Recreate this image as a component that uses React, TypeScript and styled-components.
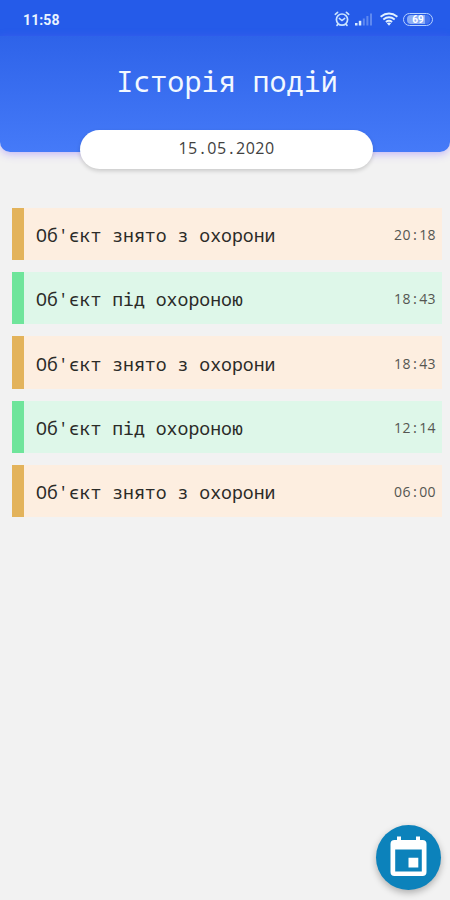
import React, { Fragment } from 'react';
import styled, { createGlobalStyle } from 'styled-components';

const GlobalStyle = createGlobalStyle`
  * { box-sizing: border-box; }
  body { margin: 0; background: #f2f2f2; }
`;

const Screen = styled.div`
  position: relative;
  display: flex;
  flex-direction: column;
  width: 450px;
  height: 900px;
  overflow: hidden;
  background: #f2f2f2;
  font-family: 'Noto Sans Mono', 'DejaVu Sans Mono', monospace;
`;

const StatusBar = styled.div`
  display: flex;
  align-items: center;
  height: 36px;
  padding: 2px 17px 0 23px;
  background: #255be9;
  color: #e9f3ff;
`;

const Clock = styled.span`
  flex: 1;
  padding-top: 1px;
  font: 700 14px/18px Roboto, sans-serif;
  letter-spacing: 0.1px;
`;

const StatusIcons = styled.div`
  display: flex;
  align-items: center;
  height: 18px;
  gap: 5px;
`;

const Header = styled.header`
  display: flex;
  flex-direction: column;
  align-items: center;
  height: 116px;
  padding-top: 24px;
  border-radius: 0 0 10px 10px;
  background: linear-gradient(#2e63e9, #457af8);
  box-shadow: 0 2px 8px rgba(125, 95, 255, 0.42);
`;

const Title = styled.h1`
  margin: 0 0 0 4px;
  height: 42px;
  color: #f2f8ff;
  font-size: 28.4px;
  font-weight: 400;
  line-height: 42px;
  white-space: nowrap;
`;

const DatePill = styled.div`
  flex-shrink: 0;
  width: 293px;
  height: 39px;
  margin: 28px 0 0 2px;
  padding-left: 1px;
  border-radius: 20px;
  background: #fff;
  box-shadow: 0 2px 4px rgba(0, 0, 0, 0.17);
  color: #414141;
  font-size: 16px;
  line-height: 37px;
  text-align: center;
`;

const Digits = styled.span`
  font-family: 'Open Sans', 'Noto Sans', sans-serif;
  letter-spacing: 0.028em;
`;

const EventList = styled.ul`
  display: flex;
  flex-direction: column;
  gap: 12px;
  margin: 56.3px 8px 0 12px;
  padding: 0;
  list-style: none;
`;

const EventRow = styled.li<{ $armed: boolean }>`
  display: flex;
  align-items: center;
  justify-content: space-between;
  height: 52.1px;
  padding: 2px 6px 0 12px;
  border-left: 12px solid ${(p) => (p.$armed ? '#6fe59b' : '#e3b35b')};
  background: ${(p) => (p.$armed ? '#def7e9' : '#fdeee0')};
`;

const EventName = styled.span`
  color: #2b2b28;
  font-size: 18.15px;
  line-height: 26px;
  white-space: nowrap;
`;

const EventTime = styled.time`
  color: #555651;
  font-size: 14px;
  line-height: 20px;
`;

const CalendarButton = styled.button`
  position: absolute;
  right: 9px;
  bottom: 10px;
  display: grid;
  place-items: center;
  width: 65px;
  height: 65px;
  padding: 0 0 2px;
  border: 0;
  border-radius: 50%;
  background: #0c82bb;
  box-shadow: 0 3px 7px rgba(0, 0, 0, 0.28);
`;

const WifiSvg = styled.svg`
  margin-left: 2px;
`;

const Battery = styled.span`
  display: flex;
  align-items: center;
  justify-content: center;
  width: 30px;
  height: 13px;
  padding: 1px;
  border: 1.5px solid #b5d0ff;
  border-radius: 7px;
`;

const BatteryLevel = styled.span`
  width: 23px;
  height: 9px;
  border-radius: 4px;
  background: linear-gradient(90deg, #8aadf6 80%, #4674ed 80%);
  color: #fff;
  font: 700 10px/9px Roboto, sans-serif;
  text-align: center;
`;

const events = [
  { armed: false, time: '20:18' },
  { armed: true, time: '18:43' },
  { armed: false, time: '18:43' },
  { armed: true, time: '12:14' },
  { armed: false, time: '06:00' },
];

/* Digits use plain zeros while separators keep the full monospace cell. */
const Numeric = ({ value, separator }: { value: string; separator: string }) => (
  <>
    {value.split(separator).map((part, index) => (
      <Fragment key={index}>
        {index > 0 && separator}
        <Digits>{part}</Digits>
      </Fragment>
    ))}
  </>
);

const AlarmIcon = () => (
  <svg width="16" height="18" viewBox="0 0 16 18" fill="none" stroke="#c9e3ff" strokeWidth="1.7" strokeLinecap="round">
    <circle cx="8" cy="9.6" r="5.6" />
    <path d="M1.3 4.3 3.6 2.3M14.7 4.3 12.4 2.3M3.9 14.4 3 15.4M12.1 14.4 13 15.4" />
    <path d="m5.3 8.4 2.7 2.1 2.7-2.1" strokeWidth="1.5" />
  </svg>
);

const SignalIcon = () => (
  <svg width="18" height="18" viewBox="0 0 18 18" fill="#d9ebff">
    <rect x="0" y="13" width="2.5" height="2.5" />
    <rect x="3.8" y="10.8" width="2.5" height="4.7" />
    <g opacity="0.32">
      <rect x="7.8" y="8.5" width="2" height="7" />
      <rect x="11.4" y="6" width="2" height="9.5" />
      <rect x="15" y="3.5" width="2" height="12" />
    </g>
  </svg>
);

const WifiIcon = () => (
  <WifiSvg width="18" height="18" viewBox="0 0 18 18" fill="none" stroke="#e0f0ff" strokeWidth="1.9">
    <path d="M.6 6.7Q9 .2 17.4 6.7M3.3 9.5Q9 5 14.7 9.5M5.9 12.1Q9 9.6 12.1 12.1" />
    <path d="m6.9 13.2 2.1 2.5 2.1-2.5Q9 11.7 6.9 13.2Z" fill="#e0f0ff" stroke="none" />
  </WifiSvg>
);

const CalendarIcon = () => (
  <svg width="37" height="41" viewBox="0 0 37 41">
    <path
      fill="#fff"
      fillRule="evenodd"
      d="M7 .5h4V4h15V.5h4V4h2.5a4 4 0 0 1 4 4v28a4 4 0 0 1-4 4h-28a4 4 0 0 1-4-4V8a4 4 0 0 1 4-4H7ZM5.2 13.5v22h26.6v-22ZM18.5 21.8h9.8v9.7h-9.8Z"
    />
  </svg>
);

export default function App() {
  return (
    <>
      <GlobalStyle />
      <Screen>
        <StatusBar>
          <Clock>11:58</Clock>
          <StatusIcons>
            <AlarmIcon />
            <SignalIcon />
            <WifiIcon />
            <Battery>
              <BatteryLevel>69</BatteryLevel>
            </Battery>
          </StatusIcons>
        </StatusBar>
        <Header>
          <Title>Історія подій</Title>
          <DatePill>
            <Numeric value="15.05.2020" separator="." />
          </DatePill>
        </Header>
        <EventList>
          {events.map((event, index) => (
            <EventRow key={index} $armed={event.armed}>
              <EventName>{event.armed ? "Об'єкт під охороною" : "Об'єкт знято з охорони"}</EventName>
              <EventTime>
                <Numeric value={event.time} separator=":" />
              </EventTime>
            </EventRow>
          ))}
        </EventList>
        <CalendarButton aria-label="Календар">
          <CalendarIcon />
        </CalendarButton>
      </Screen>
    </>
  );
}
